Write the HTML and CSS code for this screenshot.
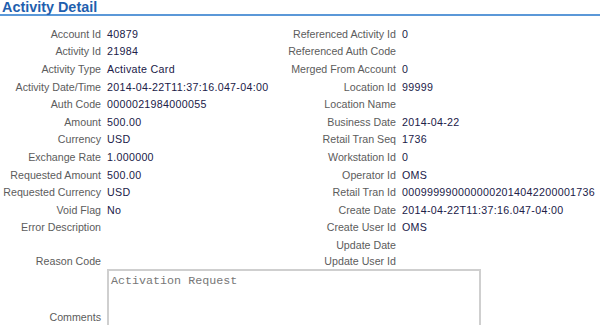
FILE: index.html
```html
<!DOCTYPE html>
<html lang="en">
<head>
  <meta charset="UTF-8" />
  <title>Activity Detail</title>
  <link rel="stylesheet" href="styles.css">
</head>
<body>

  <h1 class="section-title">Activity Detail</h1>

  <div class="detail-grid">
    <span class="label">Account Id</span><span class="value">40879</span>
    <span class="label">Referenced Activity Id</span><span class="value">0</span>

    <span class="label">Activity Id</span><span class="value">21984</span>
    <span class="label">Referenced Auth Code</span><span class="value"></span>

    <span class="label">Activity Type</span><span class="value">Activate Card</span>
    <span class="label">Merged From Account</span><span class="value">0</span>

    <span class="label">Activity Date/Time</span><span class="value">2014-04-22T11:37:16.047-04:00</span>
    <span class="label">Location Id</span><span class="value">99999</span>

    <span class="label">Auth Code</span><span class="value">0000021984000055</span>
    <span class="label">Location Name</span><span class="value"></span>

    <span class="label">Amount</span><span class="value">500.00</span>
    <span class="label">Business Date</span><span class="value">2014-04-22</span>

    <span class="label">Currency</span><span class="value">USD</span>
    <span class="label">Retail Tran Seq</span><span class="value">1736</span>

    <span class="label">Exchange Rate</span><span class="value">1.000000</span>
    <span class="label">Workstation Id</span><span class="value">0</span>

    <span class="label">Requested Amount</span><span class="value">500.00</span>
    <span class="label">Operator Id</span><span class="value">OMS</span>

    <span class="label">Requested Currency</span><span class="value">USD</span>
    <span class="label">Retail Tran Id</span><span class="value">0009999900000002014042200001736</span>

    <span class="label">Void Flag</span><span class="value">No</span>
    <span class="label">Create Date</span><span class="value">2014-04-22T11:37:16.047-04:00</span>

    <span class="label">Error Description</span><span class="value"></span>
    <span class="label">Create User Id</span><span class="value">OMS</span>

    <span class="label"></span><span class="value"></span>
    <span class="label">Update Date</span><span class="value"></span>

    <span class="label">Reason Code</span><span class="value"></span>
    <span class="label">Update User Id</span><span class="value"></span>

    <span class="label comments-label">Comments</span>
    <div class="comments-cell">
      <textarea class="comments" readonly>Activation Request</textarea>
    </div>
  </div>

</body>
</html>
```

FILE: styles.css
```css
body {
  margin: 0;
  font-family: "Liberation Sans", Arial, sans-serif;
  font-size: 8pt;
  background: #fff;
}
.section-title {
  margin: 0;
  padding: 0 0 0 2px;
  font-size: 14.4px;
  line-height: 14px;
  font-weight: bold;
  color: #1f5fae;
  border-bottom: 2px solid #5b98d8;
}
.detail-grid {
  margin-top: 9px;
  display: grid;
  grid-template-columns: 104px 181px 114px 1fr;
  grid-template-rows: repeat(12, 17.6px) 17px 16px 96px;
  align-items: center;
}
.label {
  text-align: right;
  padding-right: 3px;
  color: #5c5c5c;
  white-space: nowrap;
}
.value {
  padding-left: 3px;
  color: #202048;
  white-space: nowrap;
  letter-spacing: 0.3px;
}
.comments-label {
  grid-row: 15;
  grid-column: 1;
}
.comments-cell {
  grid-row: 15;
  grid-column: 2 / 5;
  align-self: start;
  padding-left: 3px;
}
.comments {
  display: block;
  box-sizing: border-box;
  width: 374px;
  height: 96px;
  margin: 0;
  padding: 3px 2px;
  border: 2px solid #cfcfcf;
  font-family: "Liberation Mono", "Courier New", monospace;
  font-size: 11.7px;
  color: #777;
  resize: none;
  background: #fff;
}
```
